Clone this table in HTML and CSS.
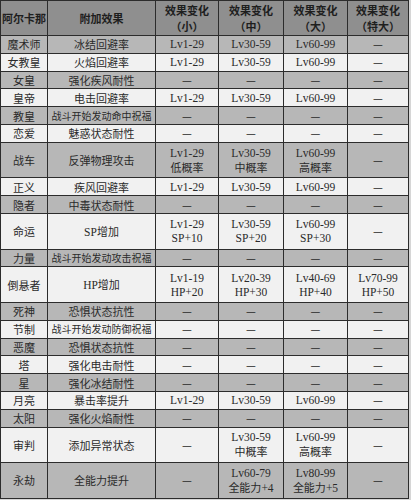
FILE: index.html
```html
<!DOCTYPE html>
<html lang="zh">
<head>
<meta charset="utf-8">
<link rel="stylesheet" href="styles.css">
</head>
<body>
<table class="arcana">
  <colgroup>
    <col class="c1"><col class="c2"><col class="c3"><col class="c4"><col class="c5"><col class="c6">
  </colgroup>
  <thead>
    <tr class="head">
      <th>阿尔卡那</th>
      <th>附加效果</th>
      <th>效果变化<br>（小）</th>
      <th>效果变化<br>（中）</th>
      <th>效果变化<br>（大）</th>
      <th>效果变化<br>（特大）</th>
    </tr>
  </thead>
  <tbody>
    <tr class="s g"><td>魔术师</td><td>冰结回避率</td><td class="lv">Lv1-29</td><td class="lv">Lv30-59</td><td class="lv">Lv60-99</td><td>—</td></tr>
    <tr class="s w"><td>女教皇</td><td>火焰回避率</td><td class="lv">Lv1-29</td><td class="lv">Lv30-59</td><td class="lv">Lv60-99</td><td>—</td></tr>
    <tr class="s g"><td>女皇</td><td>强化疾风耐性</td><td>—</td><td>—</td><td>—</td><td>—</td></tr>
    <tr class="s w"><td>皇帝</td><td>电击回避率</td><td class="lv">Lv1-29</td><td class="lv">Lv30-59</td><td class="lv">Lv60-99</td><td>—</td></tr>
    <tr class="s g"><td>教皇</td><td class="long">战斗开始发动命中祝福</td><td>—</td><td>—</td><td>—</td><td>—</td></tr>
    <tr class="s w"><td>恋爱</td><td>魅惑状态耐性</td><td>—</td><td>—</td><td>—</td><td>—</td></tr>
    <tr class="d g"><td>战车</td><td>反弹物理攻击</td><td class="lv">Lv1-29<br><span class="cj">低概率</span></td><td class="lv">Lv30-59<br><span class="cj">中概率</span></td><td class="lv">Lv60-99<br><span class="cj">高概率</span></td><td>—</td></tr>
    <tr class="s w"><td>正义</td><td>疾风回避率</td><td class="lv">Lv1-29</td><td class="lv">Lv30-59</td><td class="lv">Lv60-99</td><td>—</td></tr>
    <tr class="s g"><td>隐者</td><td>中毒状态耐性</td><td>—</td><td>—</td><td>—</td><td>—</td></tr>
    <tr class="d w"><td>命运</td><td><span class="lat">SP</span>增加</td><td class="lv">Lv1-29<br>SP+10</td><td class="lv">Lv30-59<br>SP+20</td><td class="lv">Lv60-99<br>SP+30</td><td>—</td></tr>
    <tr class="s g"><td>力量</td><td class="long">战斗开始发动攻击祝福</td><td>—</td><td>—</td><td>—</td><td>—</td></tr>
    <tr class="d w"><td>倒悬者</td><td><span class="lat">HP</span>增加</td><td class="lv">Lv1-19<br>HP+20</td><td class="lv">Lv20-39<br>HP+30</td><td class="lv">Lv40-69<br>HP+40</td><td class="lv">Lv70-99<br>HP+50</td></tr>
    <tr class="s g"><td>死神</td><td>恐惧状态抗性</td><td>—</td><td>—</td><td>—</td><td>—</td></tr>
    <tr class="s w"><td>节制</td><td class="long">战斗开始发动防御祝福</td><td>—</td><td>—</td><td>—</td><td>—</td></tr>
    <tr class="s g"><td>恶魔</td><td>恐惧状态抗性</td><td>—</td><td>—</td><td>—</td><td>—</td></tr>
    <tr class="s w"><td>塔</td><td>强化电击耐性</td><td>—</td><td>—</td><td>—</td><td>—</td></tr>
    <tr class="s g"><td>星</td><td>强化冰结耐性</td><td>—</td><td>—</td><td>—</td><td>—</td></tr>
    <tr class="s w"><td>月亮</td><td>暴击率提升</td><td class="lv">Lv1-29</td><td class="lv">Lv30-59</td><td class="lv">Lv60-99</td><td>—</td></tr>
    <tr class="s g"><td>太阳</td><td>强化火焰耐性</td><td>—</td><td>—</td><td>—</td><td>—</td></tr>
    <tr class="d w"><td>审判</td><td>添加异常状态</td><td>—</td><td class="lv">Lv30-59<br><span class="cj">中概率</span></td><td class="lv">Lv60-99<br><span class="cj">高概率</span></td><td>—</td></tr>
    <tr class="d g"><td>永劫</td><td>全能力提升</td><td>—</td><td class="lv">Lv60-79<br><span class="cj">全能力</span>+4</td><td class="lv">Lv80-99<br><span class="cj">全能力</span>+5</td><td>—</td></tr>
  </tbody>
</table>
</body>
</html>
```

FILE: styles.css
```css
html, body {
  margin: 0;
  padding: 0;
  background: #d6d6d6;
}

body {
  width: 411px;
  height: 500px;
  overflow: hidden;
  font-family: "Noto Sans CJK SC", "DejaVu Sans", sans-serif;
  color: #2a2a2a;
}

.arcana {
  border-collapse: collapse;
  table-layout: fixed;
  width: 408px;
  font-size: 11px;
}

.c1 { width: 47px; }
.c2 { width: 108px; }
.c3 { width: 63px; }
.c4 { width: 65px; }
.c5 { width: 64px; }
.c6 { width: 61px; }

.arcana th,
.arcana td {
  border: 1px solid #2c2c2c;
  padding: 0;
  text-align: center;
  vertical-align: middle;
  white-space: nowrap;
  overflow: hidden;
  line-height: 14px;
}

.head {
  height: 35px;
  background: #8f8f8f;
}

.head th {
  font-weight: 700;
  font-size: 11px;
  color: #1e1e1e;
  line-height: 16px;
}

tr.s { height: 17.8px; }
tr.d { height: 35.6px; }

tr.g { background: #b7b7b7; }
tr.w { background: #f1f1f1; }

.lv {
  font-family: "Liberation Serif", "Noto Sans CJK SC", serif;
  font-size: 11.5px;
}

.lv .cj {
  font-family: "Noto Sans CJK SC", sans-serif;
  font-size: 11px;
}

.lat {
  font-family: "Liberation Serif", serif;
  font-size: 11.5px;
}

.long {
  font-size: 10px;
}
```
